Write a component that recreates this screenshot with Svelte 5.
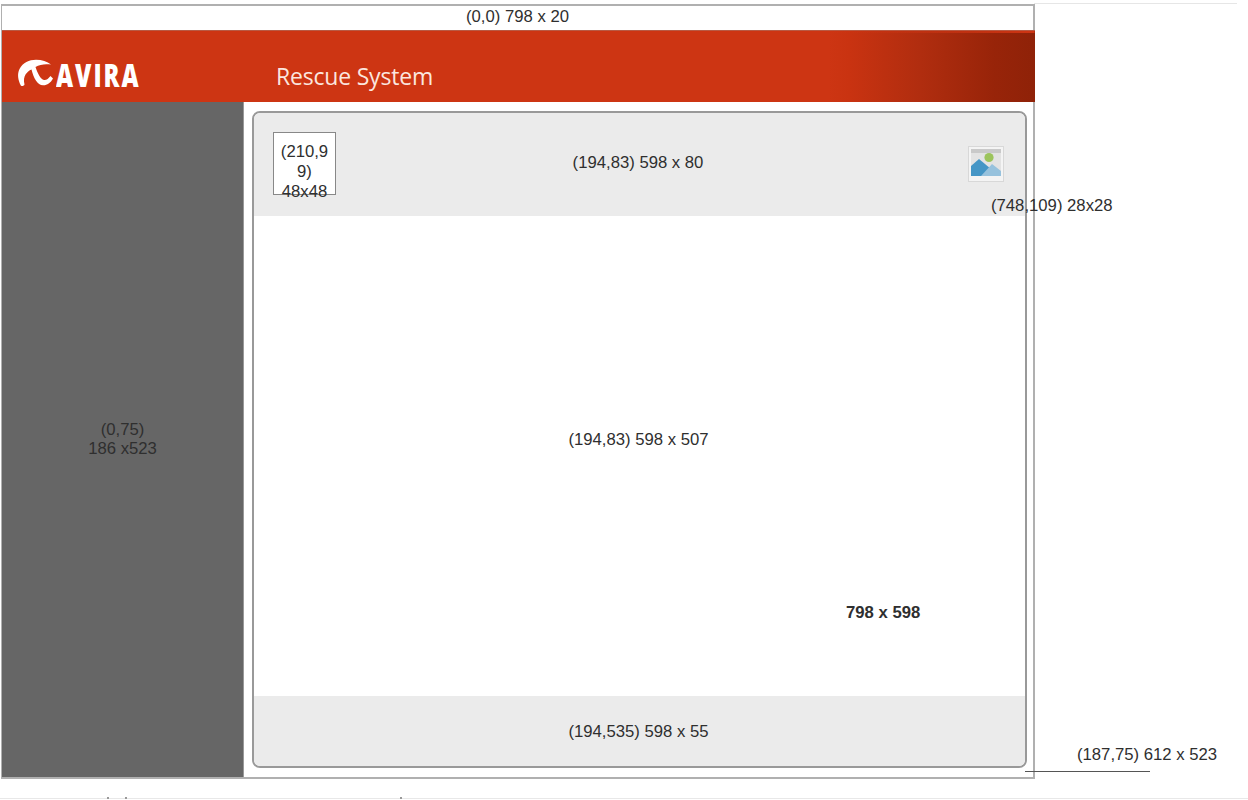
<script>
  const sidebar = { pos: '(0,75)', size: '186 x523' };
  const ticks = [107, 125, 400];
</script>

<div class="page">
  <div class="top-rule"></div>
  <div class="frame">
    <div class="title">(0,0) 798 x 20</div>
    <header class="header">
      <div class="logo">
        <svg class="mark" viewBox="0 0 36 28" width="36" height="28" aria-hidden="true">
          <path d="M3.800 26.500 C1 21 0 15 2.500 10 C6 3.500 12 0.800 19 0.800 C25 0.800 30 2.500 34 5.500 C29 4.800 23 5 18.500 8 C20.500 14 23.500 20.500 27 21 C29.500 21.300 31.500 19.500 33.500 17 L36 19.500 C33.500 24 30 26.500 26 26.300 C20.500 26 16.500 19 14.500 10.500 C10 12.500 5.500 17 7.500 25.500 C7 27 5 27.500 3.800 26.500 Z" fill="#fff" />
        </svg>
        <span class="brand">AVIRA</span>
      </div>
      <div class="product">Rescue System</div>
    </header>
    <div class="body">
      <aside class="sidebar">
        <div>{sidebar.pos}</div>
        <div>{sidebar.size}</div>
      </aside>
      <main class="main">
        <section class="panel">
          <div class="panel-head">
            <div class="avatar">(210,99)<br />48x48</div>
            <div class="head-label">(194,83) 598 x 80</div>
            <svg class="picture" viewBox="0 0 36 36" width="36" height="36" aria-hidden="true">
              <rect x="0.5" y="0.5" width="35" height="35" fill="#f4f4f4" stroke="#d8d8d8" />
              <rect x="3" y="3" width="30" height="27" fill="#e3e3e3" />
              <rect x="3" y="3" width="30" height="4" fill="#c9c9c9" />
              <circle cx="21" cy="11.500" r="4.600" fill="#9cc45c" />
              <path d="M3 20 L11 13 L23 23 L23 30 L3 30 Z" fill="#4596c6" />
              <path d="M13 30 L24 18 L33 25 L33 30 Z" fill="#97c2dd" />
            </svg>
          </div>
          <div class="panel-content">
            <div class="content-label">(194,83) 598 x 507</div>
            <div class="outer-size">798 x 598</div>
          </div>
          <div class="panel-foot">(194,535) 598 x 55</div>
        </section>
      </main>
    </div>
  </div>
  <div class="note icon-note">(748,109) 28x28</div>
  <div class="note main-note">(187,75) 612 x 523</div>
  <div class="leader"></div>
  <div class="bottom-rule"></div>
  {#each ticks as x}
    <div class="tick" style="left: {x}px"></div>
  {/each}
</div>

<style>
  :global(body) {
    margin: 0;
    background: #fff;
  }
  .page {
    position: relative;
    width: 1248px;
    height: 800px;
    overflow: hidden;
    padding: 4px 0 0 1px;
    box-sizing: border-box;
    font-family: "Liberation Sans", Arial, sans-serif;
    font-size: 16.7px;
    color: #333;
  }
  .top-rule {
    position: absolute;
    left: 1034px;
    top: 3px;
    width: 203px;
    height: 1px;
    background: #e6e6e6;
  }
  .bottom-rule {
    position: absolute;
    left: 0;
    top: 798px;
    width: 1248px;
    height: 1px;
    background: #e8e8e8;
  }
  .tick {
    position: absolute;
    top: 797px;
    width: 2px;
    height: 2px;
    background: #999;
  }
  .frame {
    width: 1034px;
    height: 775px;
    box-sizing: border-box;
    border: 2px solid #b0b0b0;
    border-left-width: 1px;
    display: flex;
    flex-direction: column;
  }
  .title {
    height: 24px;
    line-height: 22px;
    text-align: center;
    color: #2f2f2f;
    flex: none;
  }
  .header {
    flex: none;
    height: 72px;
    margin-right: -2px;
    box-sizing: border-box;
    border-top: 1px solid #b85a44;
    background:
      linear-gradient(90deg, transparent, #cf3513) right top / 20% 2px no-repeat,
      linear-gradient(90deg, #cd3513 0, #cd3513 80%, #c93311 82%, #b02d0f 89%, #982409 96%, #8f2208 100%);
    display: flex;
    align-items: flex-start;
    color: #fff;
  }
  .logo {
    width: 274px;
    flex: none;
    display: flex;
    align-items: center;
    gap: 3px;
    padding: 28px 0 0 15px;
    box-sizing: border-box;
  }
  .mark {
    flex: none;
    margin-bottom: 3px;
  }
  .brand {
    font-family: "Open Sans", "Liberation Sans", sans-serif;
    font-weight: 800;
    font-size: 31px;
    line-height: 30px;
    letter-spacing: 2.6px;
    transform: scaleX(0.76);
    transform-origin: left center;
  }
  .product {
    font-family: "Open Sans", "Noto Sans", sans-serif;
    font-size: 23px;
    line-height: 32px;
    padding-top: 29px;
    letter-spacing: -0.2px;
    color: #fbe6df;
  }
  .body {
    flex: 1;
    display: flex;
    min-height: 0;
  }
  .sidebar {
    width: 241px;
    flex: none;
    background: #666;
    border-right: 1px solid #999;
    box-sizing: content-box;
    display: flex;
    flex-direction: column;
    align-items: center;
    justify-content: center;
    padding-bottom: 2px;
    line-height: 19px;
    color: #2f2f2f;
  }
  .main {
    flex: 1;
    padding: 9px 6px 9px 8px;
    min-width: 0;
    display: flex;
  }
  .panel {
    flex: 1;
    border: 2px solid #999;
    border-radius: 8px;
    overflow: hidden;
    display: flex;
    flex-direction: column;
  }
  .panel-head {
    height: 103px;
    flex: none;
    background: #ebebeb;
    box-sizing: border-box;
    display: flex;
    align-items: center;
    padding: 0 21px 0 19px;
  }
  .avatar {
    width: 63px;
    height: 63px;
    box-sizing: border-box;
    flex: none;
    border: 1px solid #888;
    background: #fff;
    text-align: center;
    line-height: 20px;
    padding: 9px 1px 0;
    word-break: break-all;
    color: #2f2f2f;
    margin-top: -2px;
  }
  .head-label {
    flex: 1;
    text-align: center;
    margin-top: -3px;
    padding-right: 28px;
    color: #2f2f2f;
  }
  .picture {
    flex: none;
    margin-top: -2px;
  }
  .panel-content {
    flex: 1;
    background: #fff;
    position: relative;
    display: flex;
    align-items: center;
    justify-content: center;
    color: #2f2f2f;
  }
  .content-label {
    margin-top: -32px;
    margin-right: 2px;
  }
  .outer-size {
    position: absolute;
    left: 592px;
    top: 387px;
    font-weight: 700;
  }
  .panel-foot {
    height: 70px;
    flex: none;
    background: #ebebeb;
    box-sizing: border-box;
    padding: 2px 2px 0 0;
    display: flex;
    align-items: center;
    justify-content: center;
    color: #2f2f2f;
  }
  .note {
    position: absolute;
    white-space: nowrap;
    color: #2f2f2f;
    line-height: 19px;
  }
  .icon-note {
    left: 991px;
    top: 196px;
  }
  .main-note {
    left: 1077px;
    top: 745px;
  }
  .leader {
    position: absolute;
    left: 1025px;
    top: 771px;
    width: 125px;
    height: 1px;
    background: #555;
  }
</style>
